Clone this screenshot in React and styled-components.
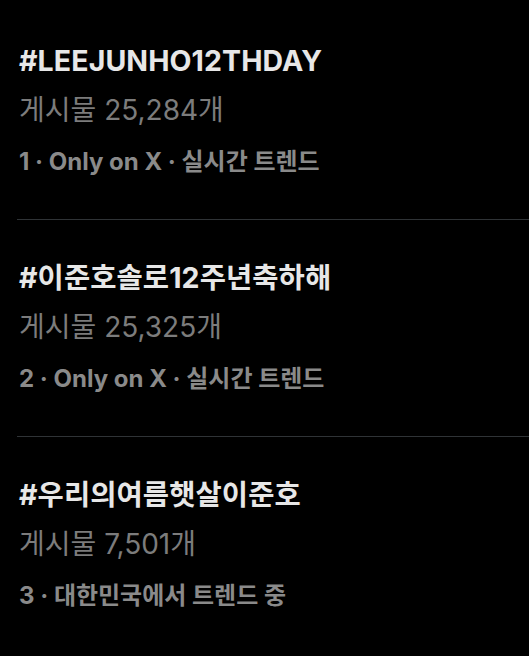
import React from "react";
import styled, { createGlobalStyle } from "styled-components";

const Global = createGlobalStyle`
  html, body { margin: 0; padding: 0; background: #000; }
  body { font-family: Inter, "Noto Sans CJK KR", sans-serif; }
`;

const Page = styled.div`
  background: #000;
  min-height: 656px;
  padding-top: 3px;
`;

const Item = styled.div`
  padding: 38px 0 35px 19px;
  display: flex;
  flex-direction: column;
`;

const Title = styled.div`
  color: #e7e7e7;
  font-size: 28.5px;
  font-weight: 700;
  line-height: 40px;
  letter-spacing: 0.1px;
`;

const Count = styled.div`
  color: #7c7c7c;
  font-size: 28px;
  font-weight: 400;
  line-height: 44px;
  margin-top: 7px;
`;

const Meta = styled.div`
  color: #8a8a8a;
  font-size: 24px;
  font-weight: 700;
  line-height: 44px;
  margin-top: 8px;
`;

const Divider = styled.div`
  height: 1px;
  background: #2f3336;
  margin-left: 17px;
`;

const trends = [
  { title: "#LEEJUNHO12THDAY", count: "게시물 25,284개", meta: "1 · Only on X · 실시간 트렌드" },
  { title: "#이준호솔로12주년축하해", count: "게시물 25,325개", meta: "2 · Only on X · 실시간 트렌드" },
  { title: "#우리의여름햇살이준호", count: "게시물 7,501개", meta: "3 · 대한민국에서 트렌드 중" },
];

export default function App() {
  return (
    <Page>
      <Global />
      {trends.map((t, i) => (
        <React.Fragment key={i}>
          {i > 0 && <Divider />}
          <Item>
            <Title>{t.title}</Title>
            <Count>{t.count}</Count>
            <Meta>{t.meta}</Meta>
          </Item>
        </React.Fragment>
      ))}
    </Page>
  );
}
